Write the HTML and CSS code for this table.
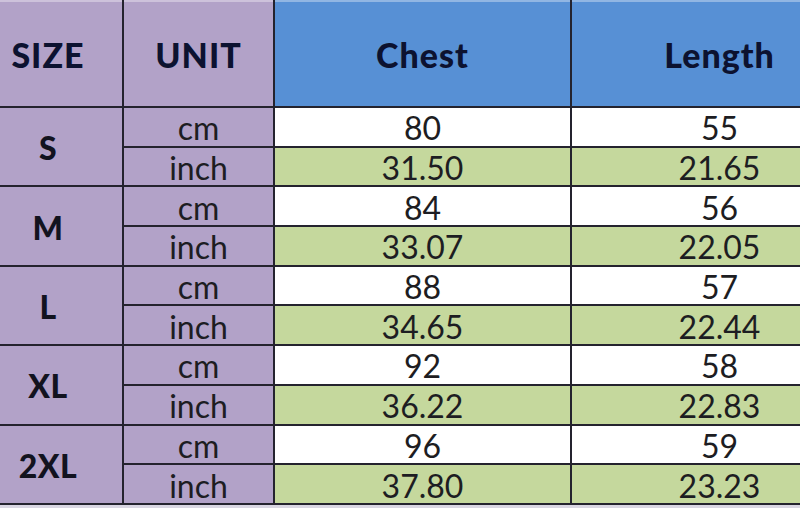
FILE: index.html
```html
<!DOCTYPE html>
<html>
<head>
<meta charset="utf-8">
<link rel="stylesheet" href="styles.css">
</head>
<body>
<div class="chart">
  <div class="hd hd-purple">SIZE</div>
  <div class="hd hd-purple">UNIT</div>
  <div class="hd hd-blue">Chest</div>
  <div class="hd hd-blue">Length</div>

  <div class="size">S</div>
  <div class="unit">cm</div><div class="val">80</div><div class="val">55</div>
  <div class="unit">inch</div><div class="val green">31.50</div><div class="val green">21.65</div>

  <div class="size">M</div>
  <div class="unit">cm</div><div class="val">84</div><div class="val">56</div>
  <div class="unit">inch</div><div class="val green">33.07</div><div class="val green">22.05</div>

  <div class="size">L</div>
  <div class="unit">cm</div><div class="val">88</div><div class="val">57</div>
  <div class="unit">inch</div><div class="val green">34.65</div><div class="val green">22.44</div>

  <div class="size">XL</div>
  <div class="unit">cm</div><div class="val">92</div><div class="val">58</div>
  <div class="unit">inch</div><div class="val green">36.22</div><div class="val green">22.83</div>

  <div class="size">2XL</div>
  <div class="unit">cm</div><div class="val">96</div><div class="val">59</div>
  <div class="unit">inch</div><div class="val green">37.80</div><div class="val green">23.23</div>
</div>
</body>
</html>
```
FILE: styles.css
```css
html, body {
  margin: 0;
  padding: 0;
}
body {
  width: 800px;
  height: 508px;
  overflow: hidden;
  background: #d9d6e2;
  font-family: Lato, "Liberation Sans", sans-serif;
}
.chart {
  display: grid;
  grid-template-columns: 148px 149px 295px 295px;
  grid-template-rows: 106px repeat(10, 37.7px);
  gap: 2px;
  background: #24232e;
  margin-left: -26px;
  padding-bottom: 2px;
  width: max-content;
}
.chart > div {
  display: flex;
  align-items: center;
  justify-content: center;
  color: #1d1d22;
  font-size: 32px;
  line-height: 1;
  padding-top: 3px;
}
.hd {
  font-weight: 900;
  border-top: 2px solid rgba(255, 255, 255, 0.35);
}
.chart > .hd {
  color: #0c1230;
  font-size: 34px;
  letter-spacing: 1px;
  padding-top: 2px;
}
.hd-purple {
  background: #b2a2c8;
}
.hd-blue {
  background: #5790d5;
}
.size {
  grid-row: span 2;
  background: #b2a2c8;
  font-weight: 900;
}
.chart > .size {
  color: #12131f;
  font-size: 32px;
  letter-spacing: 0.5px;
}
.unit {
  background: #b2a2c8;
}
.val {
  background: #ffffff;
}
.val.green {
  background: #c5d89d;
}
```
